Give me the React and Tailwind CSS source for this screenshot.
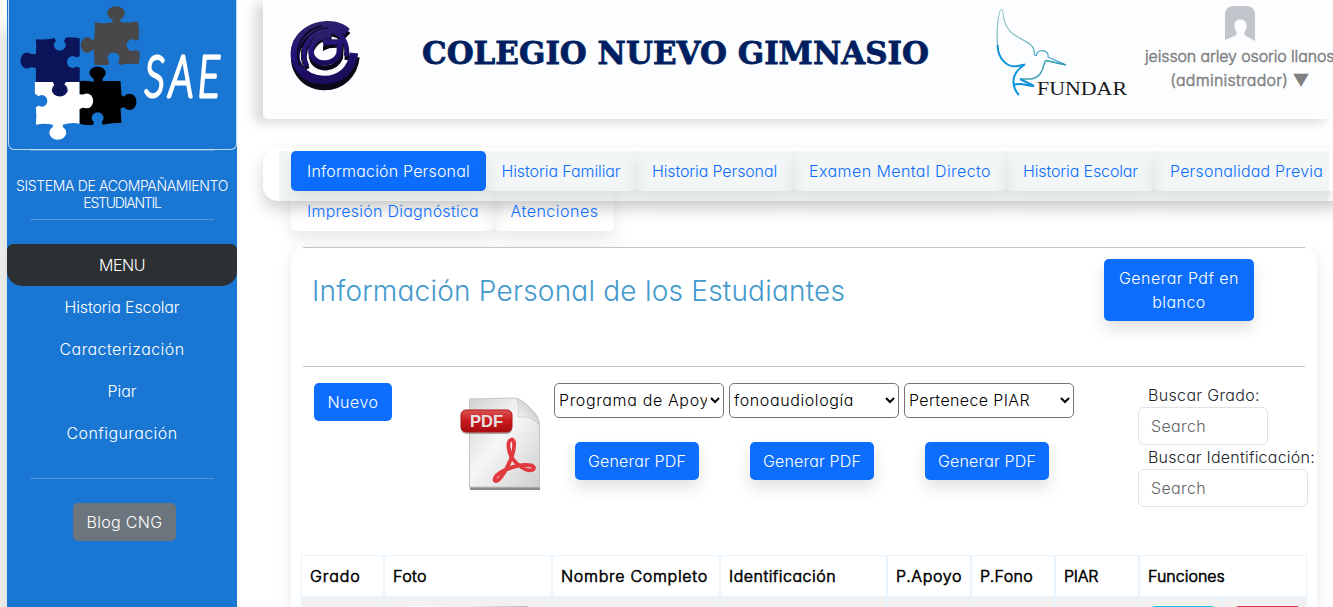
const BTN =
  "shrink-0 rounded-[5px] bg-[#0d6efd] text-white flex items-center justify-center text-center";
const BTN_SHADOW = "shadow-[0_8px_16px_rgba(0,0,0,0.12)]";

function PuzzleLogo() {
  return (
    <svg className="block h-full w-full" viewBox="8 0 228 149">
      <g fill="#48484a">
        <path d="M94 22 Q103 24 112 22 L112 18 L120 18 L120 22 Q128 23 137 21 Q140 30 138 40 L139 51 Q140 58 138 64 Q128 63 119 65 L94 65 L93 50 L88 49 L88 39 L93 40 Q95 30 94 22Z" />
        <ellipse cx="115.5" cy="13" rx="8.800" ry="7" />
        <ellipse cx="86.500" cy="45" rx="6.500" ry="7.800" />
      </g>
      <g fill="#1976d2">
        <ellipse cx="132" cy="45" rx="5.800" ry="5.800" />
        <path d="M134 41 L142 38 L142 53 L134 49Z" />
        <ellipse cx="113" cy="58" rx="6" ry="5.500" />
        <path d="M110 60 L107 67 L120 67 L117 60Z" />
      </g>
      <g fill="#fff">
        <path d="M34 82 L79 82 L79 124 Q71 122 62 125 L62 129 L52 129 L52 125 Q44 123 35 125 Q36 117 35 107 L34 94Z" />
        <ellipse cx="57" cy="133" rx="8.500" ry="7" />
      </g>
      <g fill="#000">
        <path d="M79 81 Q85 80 93 82 L93 78 L102 78 L102 81 L120 81 L121 95 L124 97 L124 107 L120 109 L121 123 Q111 123 102 125 L93 125 Q85 126 79 124Z" />
        <ellipse cx="97" cy="73" rx="8.200" ry="6.500" />
        <ellipse cx="129" cy="102" rx="7" ry="8.200" />
      </g>
      <g fill="#1976d2">
        <ellipse cx="97" cy="118" rx="6" ry="5.500" />
        <path d="M94 120 L92 127 L103 127 L100 120Z" />
        <ellipse cx="41" cy="101" rx="5.500" ry="6" />
        <path d="M39 97 L33 93 L33 109 L39 105Z" />
      </g>
      <g fill="#fff">
        <ellipse cx="86" cy="101" rx="6.500" ry="7.500" />
        <path d="M77 94 L85 95 L85 107 L77 110Z" />
      </g>
      <g fill="#0c1459">
        <path d="M35 39 Q44 40 53 38 L66 37 Q73 37 79 38 L79 82 L65 82 L63 86 L54 86 L52 82 L35 82 L35 68 L29 67 L29 54 L35 54 Q36 46 35 39Z" />
        <ellipse cx="26" cy="60.500" rx="6.500" ry="8" />
        <ellipse cx="59" cy="90" rx="8" ry="6.500" />
      </g>
      <g fill="#1976d2">
        <ellipse cx="59" cy="45" rx="6" ry="5.500" />
        <path d="M56 43 L53 36 L66 36 L62 43Z" />
        <ellipse cx="72" cy="62" rx="5.800" ry="6" />
        <path d="M74 58 L80 56 L80 68 L74 66Z" />
      </g>
      <text
        x="144"
        y="97"
        fill="#fff"
        stroke="#fff"
        strokeWidth="3"
        strokeLinejoin="round"
        fontFamily="Lato, sans-serif"
        fontStyle="italic"
        fontSize="58"
        textLength="80"
        lengthAdjust="spacingAndGlyphs"
        letterSpacing="6"
      >
        SAE
      </text>
    </svg>
  );
}

function SchoolMark() {
  return (
    <svg className="h-[74px] w-[74px]" viewBox="288 20 74 74" fill="none">
      <defs>
        <linearGradient id="mark" x1="0" y1="0" x2="0.3" y2="1">
          <stop offset="0" stopColor="#2f2468" />
          <stop offset="0.5" stopColor="#25127a" />
          <stop offset="1" stopColor="#1c0c5c" />
        </linearGradient>
      </defs>
      <g stroke="#0b0818" transform="translate(0.5 3)">
        <path d="M347 33 C334 21 307 25 297 44 C289 62 302 83 324 83 C341 83 353 71 355 54" strokeWidth="8.500" />
        <path d="M307 66 C298 48 311 31 328 31 C341 31 349 42 346 57" strokeWidth="4.500" />
        <path d="M331 36 C316 34 307 47 312 58 C318 69 336 66 340 55 L341 42 L323 43" strokeWidth="5" />
      </g>
      <g stroke="url(#mark)">
        <path d="M347 32 C334 20 307 24 297 43 C290 61 302 80 324 80 C341 80 352 69 354 53" strokeWidth="8.500" />
        <path d="M307 66 C298 48 311 31 328 31 C341 31 349 42 346 56" strokeWidth="4.500" />
        <path d="M331 36 C317 34 308 46 312 56 C318 67 335 64 339 54 L340 42 L323 42" strokeWidth="5.500" />
      </g>
      <path d="M323 46 L336 45 L323 51Z" fill="#0b0818" />
      <path d="M300 66 C292 46 305 29 322 26" stroke="#07050f" strokeWidth="1.400" />
      <path d="M304 68 C295 46 310 28 328 28" stroke="#07050f" strokeWidth="1" />
    </svg>
  );
}

function FundarLogo() {
  return (
    <svg className="h-[94px] w-[134px]" viewBox="996 6 134 94" fill="none">
      <defs>
        <linearGradient id="bird" x1="0" y1="0" x2="0" y2="1">
          <stop offset="0" stopColor="#a5cfd0" />
          <stop offset="0.6" stopColor="#5fb0b5" />
          <stop offset="1" stopColor="#1b94d2" />
        </linearGradient>
      </defs>
      <path
        d="M997.500 45 C996 30 999 9 1001.500 9 C1003.500 9 1002 22 1009 30 C1017 40 1032 41 1034 50 C1034 57 1037 57 1037 53 C1040 49 1049 50 1048 57 L1066 65 L1046 60.500"
        stroke="url(#bird)"
        strokeWidth="1.100"
      />
      <path d="M1066 65 L1046 60.500 C1043 61 1045 78 1030 79 L1020 79" stroke="#3ba0ae" strokeWidth="1.500" />
      <path
        d="M997.500 45 C998 60 1008 68 1018 66 L1025 64.500 C1016 70 1013 76 1013.500 83 C1014 89 1016 92 1019 95 M1020 79 L1034 86 C1027 86 1021 82 1014 85"
        stroke="#0c92da"
        strokeWidth="2"
      />
      <text
        x="1037"
        y="95"
        fontSize="19"
        fontFamily="'Liberation Serif', serif"
        fill="#1a1a1a"
        textLength="90"
        lengthAdjust="spacingAndGlyphs"
      >
        FUNDAR
      </text>
    </svg>
  );
}

function PdfIcon() {
  return (
    <svg className="h-[96px] w-[84px] shrink-0" viewBox="459 397 84 96">
      <defs>
        <linearGradient id="sheet" x1="0" y1="0" x2="1" y2="1">
          <stop offset="0" stopColor="#d2d2d2" />
          <stop offset="0.45" stopColor="#f6f6f6" />
          <stop offset="1" stopColor="#cfcfcf" />
        </linearGradient>
        <linearGradient id="label" x1="0" y1="0" x2="0" y2="1">
          <stop offset="0" stopColor="#dc5454" />
          <stop offset="0.5" stopColor="#c8191c" />
          <stop offset="1" stopColor="#a50c10" />
        </linearGradient>
        <linearGradient id="fold" x1="0" y1="1" x2="1" y2="0">
          <stop offset="0" stopColor="#fff" />
          <stop offset="1" stopColor="#bbb" />
        </linearGradient>
      </defs>
      <path d="M470 487 L540 487 L540 490 L470 490Z" fill="#8b8b8b" />
      <path
        d="M469.500 399 L515 398 Q521 399 529 407 Q539 416 539.500 424 L539.500 487 L469.500 487Z"
        fill="url(#sheet)"
        stroke="#c4c4c4"
      />
      <path
        d="M517 399 Q520 408 518 417 Q531 415 539 425 Q538 414 529 407 Q522 400 517 399Z"
        fill="url(#fold)"
        stroke="#bbb"
        strokeWidth="0.600"
      />
      <rect x="461" y="412" width="51" height="22" rx="5" fill="#000" opacity="0.3" />
      <rect x="461" y="410" width="51" height="22" rx="5" fill="url(#label)" stroke="#b01418" />
      <text
        x="470"
        y="427"
        fontSize="17"
        fontWeight="bold"
        fontFamily="'Liberation Sans', sans-serif"
        fill="#e8e0e0"
        textLength="33"
        lengthAdjust="spacingAndGlyphs"
      >
        PDF
      </text>
      <path
        d="M511 440 C507 441 508 451 512 458 C516 464 526 472 532 470 C536 468 534 465 526 465 C514 465 501 471 496 476 C492 482 497 483 501 477 C508 468 515 452 514 443 C514 440 512 439 511 440Z"
        fill="none"
        stroke="#e0393d"
        strokeWidth="3.800"
        strokeLinejoin="round"
      />
    </svg>
  );
}

function Avatar() {
  return (
    <svg className="block h-[37px] w-[30px]" viewBox="0 0 30 37">
      <path
        fill="#c2c5cb"
        d="M9 0 H21 Q30 0 30 9 V35 L21 30 Q18.500 28.500 19.500 26 Q22 23 21.500 19 Q21 13.500 15.500 13.500 Q9.500 13.500 9.500 19 Q9 23 11.500 26 Q12 29 9.500 30 L0 34 V9 Q0 0 9 0Z"
      />
    </svg>
  );
}

function MenuItem({ children, className = "" }) {
  return <a className={`flex h-[42px] items-center justify-center ${className}`}>{children}</a>;
}

function Sidebar() {
  return (
    <aside className="flex h-[607px] w-[230px] shrink-0 flex-col items-center bg-[#1976d2] text-white shadow-[-10px_28px_14px_rgba(0,0,0,0.11)]">
      <div className="h-[150px] w-[229px] overflow-hidden rounded-b-[6px] border border-t-0 border-[#bcd7f2]">
        <PuzzleLogo />
      </div>
      <hr className="w-[184px] border-[#5598dc]" />
      <p className="mt-[26px] flex flex-col items-center text-[14px] leading-[17px]">
        <span className="-tracking-[0.36px]">SISTEMA DE ACOMPAÑAMIENTO</span>
        <span className="-tracking-[1.2px]">ESTUDIANTIL</span>
      </p>
      <hr className="mt-2 w-[184px] border-[#5598dc]" />
      <nav className="mt-6 w-full">
        <MenuItem className="rounded-t-[6px] rounded-b-[15px] bg-[#2c3033] -tracking-[0.5px]">MENU</MenuItem>
        <MenuItem className="-tracking-[0.13px]">Historia Escolar</MenuItem>
        <MenuItem className="tracking-[0.43px]">Caracterización</MenuItem>
        <MenuItem>Piar</MenuItem>
        <MenuItem className="tracking-[0.42px]">Configuración</MenuItem>
      </nav>
      <hr className="mt-6 w-[184px] border-[#5598dc]" />
      <button className="mt-6 ml-[5px] h-[38px] w-[103px] rounded-[5px] bg-[#6c757d] tracking-[0.32px]">
        Blog CNG
      </button>
    </aside>
  );
}

function Header() {
  return (
    <header className="flex h-[119px] w-[1070px] shrink-0 items-start rounded-bl-[5px] bg-[#fcfdff] shadow-[-9px_4px_11px_rgba(0,0,0,0.14)]">
      <div className="mt-5 ml-[25px]">
        <SchoolMark />
      </div>
      <svg className="mt-[34px] ml-[56px] h-[38px] w-[516px] shrink-0" viewBox="-4 0 516 38">
        <text
          x="0"
          y="30"
          fontSize="31"
          fontWeight="bold"
          fontFamily="'DejaVu Serif', serif"
          fill="#001f60"
          stroke="#001f60"
          strokeWidth="0.800"
          textLength="507"
          lengthAdjust="spacingAndGlyphs"
        >
          COLEGIO NUEVO GIMNASIO
        </text>
      </svg>
      <div className="mt-1.5 ml-[62px] shrink-0">
        <FundarLogo />
      </div>
      <div className="mt-[6px] ml-[15px] flex shrink-0 flex-col items-center leading-6 text-[#808080] [-webkit-text-stroke:0.5px_#808080]">
        <Avatar />
        <span className="mt-px whitespace-nowrap -tracking-[0.15px]">jeisson arley osorio llanos</span>
        <span className="whitespace-nowrap tracking-[0.25px]">(administrador) ▼</span>
      </div>
    </header>
  );
}

const TAB =
  "flex h-10 shrink-0 items-center justify-center whitespace-nowrap rounded-[5px] shadow-[0_8px_16px_rgba(0,0,0,0.09)]";

function Tabs() {
  return (
    <div className="mt-[29px] h-[53px] w-[1082px] shrink-0 rounded-[15px] bg-white pt-[3px] pl-4 shadow-[0_8px_16px_rgba(0,0,0,0.18)]">
      <div className="h-[50px] w-[1050px] bg-[#f2f6f7] pl-3 text-[#0d6efd]">
        <div className="flex">
          <a className={`${TAB} w-[195px] bg-[#0d6efd] tracking-[0.18px] text-white`}>Información Personal</a>
          <a className={`${TAB} w-[150px] -tracking-[0.1px]`}>Historia Familiar</a>
          <a className={`${TAB} w-[157px] -tracking-[0.13px]`}>Historia Personal</a>
          <a className={`${TAB} w-[214px] tracking-[0.42px]`}>Examen Mental Directo</a>
          <a className={`${TAB} w-[147px] -tracking-[0.13px]`}>Historia Escolar</a>
          <a className={`${TAB} w-[185px] tracking-[0.19px]`}>Personalidad Previa</a>
        </div>
        <div className="flex">
          <a className={`${TAB} w-[204px] tracking-[0.25px]`}>Impresión Diagnóstica</a>
          <a className={`${TAB} w-[119px] tracking-[0.5px]`}>Atenciones</a>
        </div>
      </div>
    </div>
  );
}

function PdfFilter({ value, className }) {
  return (
    <div className="w-[170px]">
      <select
        className={`block h-[35px] w-[170px] rounded-[5px] border border-[#767676] bg-white pb-0.5 font-light text-black ${className}`}
      >
        <option>{value}</option>
      </select>
      <button className={`${BTN} ${BTN_SHADOW} mt-6 ml-[21px] h-[38px] w-[124px] tracking-[0.16px]`}>
        Generar PDF
      </button>
    </div>
  );
}

const INPUT =
  "block h-[38px] rounded-[6px] border border-[#dee2e6] bg-white px-3 font-light tracking-[0.35px] placeholder:text-[#5e6368]";

function Toolbar() {
  return (
    <div className="mt-4 flex h-[172px] items-start pl-[11px]">
      <button className={`${BTN} h-[38px] w-[78px] tracking-[0.48px]`}>Nuevo</button>
      <div className="mt-[14px] ml-[67px] shrink-0">
        <PdfIcon />
      </div>
      <div className="ml-[11px] flex shrink-0 gap-[5px]">
        <PdfFilter value="Programa de Apoyo" className="tracking-[0.64px]" />
        <PdfFilter value="fonoaudiología" className="tracking-[0.6px]" />
        <PdfFilter value="Pertenece PIAR" className="tracking-[0.38px]" />
      </div>
      <div className="ml-16 w-[170px] shrink-0 whitespace-nowrap text-[#212529]">
        <label className="block h-6 pl-[10px] leading-6 tracking-[0.34px]">Buscar Grado:</label>
        <input className={`${INPUT} w-[130px]`} placeholder="Search" />
        <label className="block h-6 pl-[10px] leading-6 tracking-[0.23px]">Buscar Identificación:</label>
        <input className={`${INPUT} w-[170px]`} placeholder="Search" />
      </div>
    </div>
  );
}

const CELL = "border-l-2 border-[#e9f5fe]";
const COLUMNS = [
  ["Grado", "tracking-[0.9px]"],
  ["Foto", "tracking-[0.4px]"],
  ["Nombre Completo", "tracking-[0.7px]"],
  ["Identificación", "tracking-[0.47px]"],
  ["P.Apoyo", "tracking-[0.62px]"],
  ["P.Fono", "tracking-[0.3px]"],
  ["PIAR", "-tracking-[0.29px]"],
  ["Funciones", ""],
];

function StudentsTable() {
  return (
    <div className="-ml-0.5 w-[1006px] border border-[#e9f5fe] bg-white">
      <div className="grid h-[40px] grid-cols-[81px_168px_168px_167px_84px_84px_84px_1fr] text-black [-webkit-text-stroke:0.6px_#000]">
        {COLUMNS.map(([name, tracking], i) => (
          <div
            key={name}
            className={`flex items-center pl-2 whitespace-nowrap ${i === 0 ? "" : CELL} ${tracking}`}
          >
            {name}
          </div>
        ))}
      </div>
      <div className="grid h-[60px] grid-cols-[81px_168px_168px_167px_84px_84px_84px_84px_1fr] border-t-2 border-[#e9f5fe] bg-[#f1f1f1]">
        <div />
        <div className={`${CELL} flex justify-center pt-2`}>
          <div className="h-12 w-[120px] bg-linear-to-r from-white via-[#eeeef4] to-[#b9b5ce]" />
        </div>
        <div className={CELL} />
        <div className={CELL} />
        <div className={CELL} />
        <div className={CELL} />
        <div className={CELL} />
        <div className={`${CELL} pt-2 pl-[10px]`}>
          <div className="h-[38px] w-[66px] rounded-[5px] bg-[#0dcaf0]" />
        </div>
        <div className={`${CELL} pt-2 pl-[10px]`}>
          <div className="h-[38px] w-[67px] rounded-[5px] bg-[#dc3545]" />
        </div>
      </div>
    </div>
  );
}

export default function App() {
  return (
    <div className="flex h-[607px] w-[1333px] overflow-hidden bg-white pl-[7px] font-['Inter',sans-serif] text-[16px] font-light [font-feature-settings:'cv11']">
      <Sidebar />
      <main className="ml-[26px] flex w-[1070px] shrink-0 flex-col">
        <Header />
        <Tabs />
        <section className="mt-[46px] ml-7 h-[500px] w-[1026px] shrink-0 rounded-[15px] bg-white px-3 shadow-[0_6px_16px_rgba(0,0,0,0.1)]">
          <hr className="border-[#c4c4c4]" />
          <div className="flex h-[118px] items-start justify-between pr-[51px] pl-[9px]">
            <h1 className="mt-[25px] text-[28px] leading-9 tracking-[0.22px] whitespace-nowrap text-[#4399cd]">
              Información Personal de los Estudiantes
            </h1>
            <button className={`${BTN} ${BTN_SHADOW} mt-[11px] h-[62px] w-[150px] px-3 leading-6 tracking-[0.46px]`}>
              Generar Pdf en blanco
            </button>
          </div>
          <hr className="border-[#c4c4c4]" />
          <Toolbar />
          <StudentsTable />
        </section>
      </main>
    </div>
  );
}
